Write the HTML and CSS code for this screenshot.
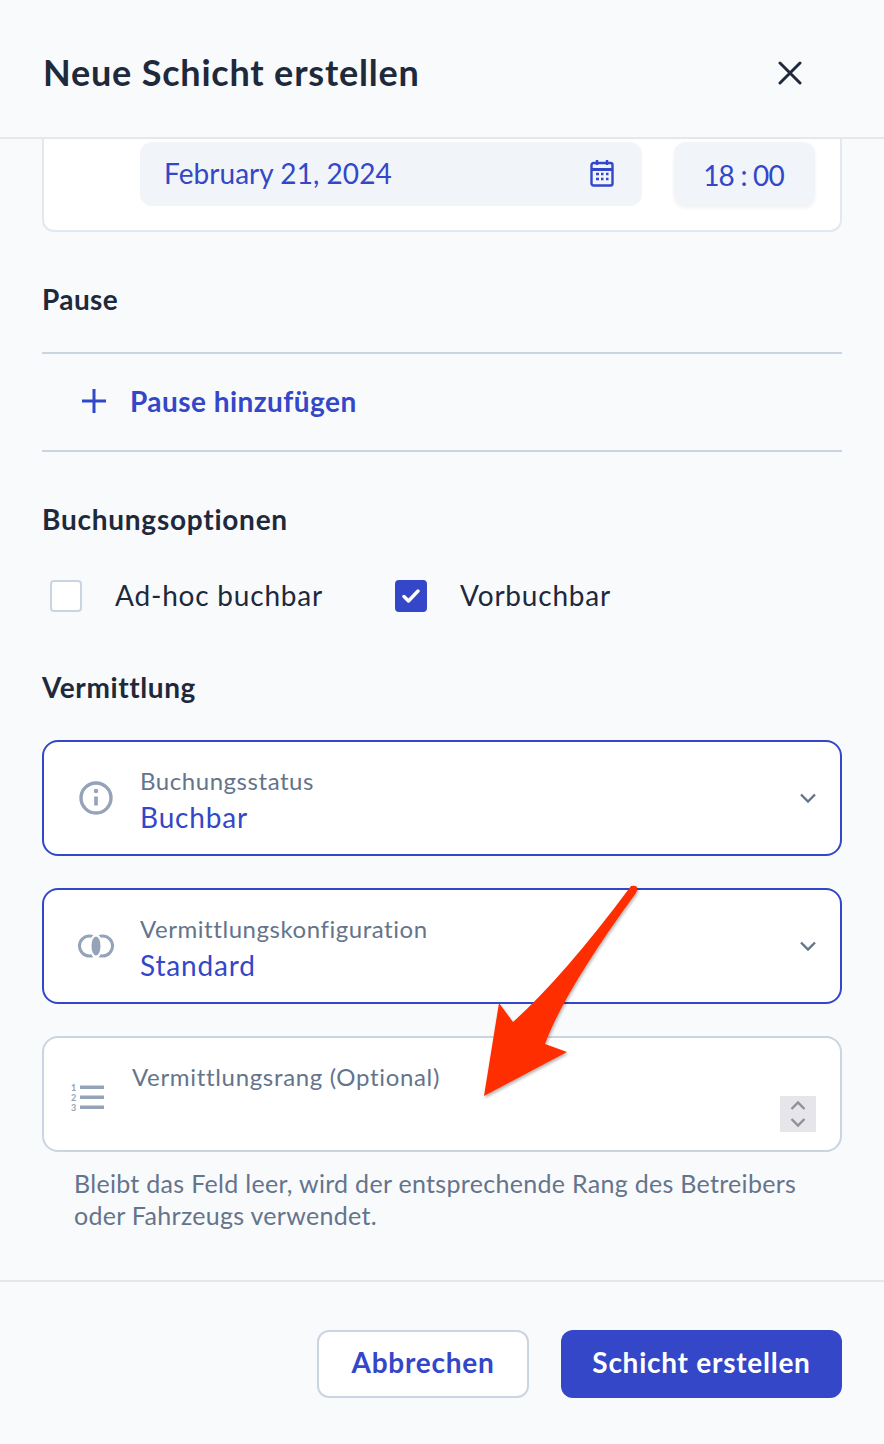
FILE: index.html
```html
<!DOCTYPE html>
<html lang="de">

<head>
    <meta charset="UTF-8">
    <meta name="viewport" content="width=device-width, initial-scale=1">
    <title>Neue Schicht erstellen</title>
    <link rel="stylesheet" href="styles.css">
</head>

<body>
    <header class="header">
        <h1>Neue Schicht erstellen</h1>
        <svg class="close" viewBox="0 0 24 24" width="24" height="24" fill="none" stroke="#1e293b" stroke-width="3" stroke-linecap="round">
            <path d="M2 2l20 20M22 2L2 22" />
        </svg>
    </header>

    <main class="content">
        <div class="card">
            <div class="date-field">
                <span class="date-text">February 21, 2024</span>
                <svg viewBox="0 0 24 28" width="24" height="28" fill="none" stroke="#3347c8" stroke-width="2.400">
                    <rect x="1.500" y="4" width="21" height="22.500" rx="2" />
                    <path d="M1.500 10.500h21" stroke-width="3" />
                    <path d="M7 1v5M17 1v5" />
                    <path d="M6 15h3M11 15h2.500M16 15h2.500M6 20h3M11 20h2.500M16 20h2.500" stroke-width="2.600" />
                </svg>
            </div>
            <div class="time-field">18 : 00</div>
        </div>

        <h2 class="section-title pause-title">Pause</h2>
        <div class="add-row">
            <svg viewBox="0 0 24 24" width="24" height="24" fill="none" stroke="#3347c8" stroke-width="3">
                <path d="M12 0v24M0 12h24" />
            </svg>
            <span class="add-text">Pause hinzufügen</span>
        </div>

        <h2 class="section-title options-title">Buchungsoptionen</h2>
        <div class="options">
            <label class="option">
                <span class="box"></span>
                <span class="option-text">Ad-hoc buchbar</span>
            </label>
            <label class="option">
                <span class="box checked">
                    <svg viewBox="0 0 18 14" width="18" height="14" fill="none" stroke="#fff" stroke-width="3.400" stroke-linecap="round" stroke-linejoin="round">
                        <path d="M2 7.500l4.500 4.500L16 2" />
                    </svg>
                </span>
                <span class="option-text">Vorbuchbar</span>
            </label>
        </div>

        <h2 class="section-title match-title">Vermittlung</h2>

        <div class="select">
            <svg class="select-icon" viewBox="0 0 36 36" width="36" height="36" fill="none" stroke="#94a3b8" stroke-width="3.400">
                <circle cx="18" cy="18" r="15" />
                <path d="M18 16.500v9" stroke-width="3.600" />
                <circle cx="18" cy="11" r="2.200" fill="#94a3b8" stroke="none" />
            </svg>
            <div class="select-text">
                <span class="select-label">Buchungsstatus</span>
                <span class="select-value">Buchbar</span>
            </div>
            <svg class="chevron" viewBox="0 0 16 10" width="16" height="10" fill="none" stroke="#64748b" stroke-width="2.400">
                <path d="M1 1.500l7 7 7-7" />
            </svg>
        </div>

        <div class="select">
            <svg class="select-icon" viewBox="0 0 36 24" width="36" height="24" fill="none" stroke="#94a3b8" stroke-width="3">
                <circle cx="11.500" cy="12" r="10" />
                <circle cx="24.500" cy="12" r="10" />
                <ellipse cx="18" cy="12" rx="6.500" ry="12" fill="#fff" stroke="none" />
                <ellipse cx="18" cy="12" rx="4.500" ry="9.500" fill="#94a3b8" stroke="none" />
            </svg>
            <div class="select-text">
                <span class="select-label">Vermittlungskonfiguration</span>
                <span class="select-value">Standard</span>
            </div>
            <svg class="chevron" viewBox="0 0 16 10" width="16" height="10" fill="none" stroke="#64748b" stroke-width="2.400">
                <path d="M1 1.500l7 7 7-7" />
            </svg>
        </div>

        <div class="rank-field">
            <svg class="rank-icon" viewBox="-2 -3 38 34" width="38" height="34" fill="#94a3b8">
                <rect x="9" y="1.500" width="24" height="3.500" />
                <rect x="9" y="11.500" width="24" height="3.500" />
                <rect x="9" y="21.500" width="24" height="3.500" />
                <text class="rank-digit" x="0" y="7">1</text>
                <text class="rank-digit" x="0" y="17">2</text>
                <text class="rank-digit" x="0" y="27">3</text>
            </svg>
            <span class="rank-label">Vermittlungsrang (Optional)</span>
            <div class="spinner">
                <svg viewBox="0 0 16 28" width="16" height="28" fill="none" stroke="#8f8f9d" stroke-width="2.400">
                    <path d="M1.500 9l6.500-6.500L14.500 9M1.500 19l6.500 6.500 6.500-6.500" />
                </svg>
            </div>
        </div>
        <p class="help">Bleibt das Feld leer, wird der entsprechende Rang des Betreibers oder Fahrzeugs verwendet.</p>
    </main>

    <footer class="footer">
        <button class="btn btn-secondary">Abbrechen</button>
        <button class="btn btn-primary">Schicht erstellen</button>
    </footer>

    <!-- red annotation arrow from the screenshot -->
    <svg class="arrow" viewBox="0 0 884 1444" width="884" height="1444">
        <defs>
            <filter id="arrowShadow" x="-10%" y="-10%" width="120%" height="120%">
                <feDropShadow dx="1" dy="2" stdDeviation="1.500" flood-color="#000" flood-opacity="0.3" />
            </filter>
        </defs>
        <path d="M631 886Q640 884 636 893Q565 990 545 1044L567 1052L484 1096L499 1003L513 1022Q565 975 631 886Z" fill="#ff2d00" filter="url(#arrowShadow)" />
    </svg>
</body>

</html>
```

FILE: styles.css
```css
* {
    box-sizing: border-box;
}

body {
    width: 884px;
    height: 1444px;
    margin: 0;
    overflow: hidden;
    position: relative;
    background-color: #f9fafc;
    color: #1e293b;
    font-family: Lato, "Noto Sans", Arial, sans-serif;
}

.header {
    height: 139px;
    padding: 7px 82px 0 43px;
    display: flex;
    align-items: center;
    justify-content: space-between;
    border-bottom: 2px solid #e5e7eb;
}

.header h1 {
    margin: 0;
    font-size: 36px;
    font-weight: 700;
    letter-spacing: 0.8px;
}

.close {
    display: block;
    margin-top: 1px;
}

.content {
    height: 1143px;
    padding: 0 42px;
    border-bottom: 2px solid #e5e7eb;
}

.card {
    height: 93px;
    padding: 3px 25px 0 96px;
    display: flex;
    gap: 32px;
    background-color: #fff;
    border: 2px solid #e2e8f0;
    border-top: none;
    border-radius: 0 0 12px 12px;
}

.date-field {
    flex: none;
    width: 502px;
    height: 64px;
    padding: 0 28px 2px 24px;
    display: flex;
    align-items: center;
    justify-content: space-between;
    background-color: #f1f4f9;
    border-radius: 12px;
    color: #3347c8;
    font-size: 28px;
}

.date-text {
    letter-spacing: 0.05px;
}

.time-field {
    flex: none;
    width: 141px;
    height: 64px;
    padding: 2px 2px 0 0;
    display: flex;
    align-items: center;
    justify-content: center;
    background-color: #f1f4f9;
    border-radius: 12px;
    box-shadow: 0 2px 4px rgba(0, 0, 0, 0.06);
    color: #3347c8;
    font-size: 28px;
    letter-spacing: -0.8px;
}

.section-title {
    margin: 0;
    font-size: 28px;
    font-weight: 700;
    line-height: 36px;
    letter-spacing: 0.6px;
}

.pause-title {
    margin-top: 49px;
    letter-spacing: 0.4px;
}

.add-row {
    height: 100px;
    margin-top: 35px;
    padding: 0 0 2px 40px;
    display: flex;
    align-items: center;
    gap: 24px;
    border-top: 2px solid #cbd5e1;
    border-bottom: 2px solid #cbd5e1;
    color: #3347c8;
    font-size: 28px;
    font-weight: 700;
}

.add-text {
    letter-spacing: 0.45px;
}

.options-title {
    margin-top: 49px;
    letter-spacing: 0.75px;
}

.options {
    margin-top: 41px;
    padding-left: 8px;
    display: flex;
    gap: 72px;
}

.option {
    display: flex;
    align-items: center;
    gap: 33px;
    font-size: 28px;
}

.option-text {
    letter-spacing: 0.8px;
    margin-bottom: 1px;
}

.box {
    width: 32px;
    height: 32px;
    display: flex;
    align-items: center;
    justify-content: center;
    background-color: #fff;
    border: 2px solid #cbd5e1;
    border-radius: 4px;
}

.box.checked {
    background-color: #3347c8;
    border-color: #3347c8;
}

.match-title {
    margin-top: 56px;
    margin-bottom: 35px;
}

.select {
    height: 116px;
    margin-bottom: 32px;
    padding: 0 24px 0 34px;
    display: flex;
    align-items: center;
    background-color: #fff;
    border: 2px solid #3347c8;
    border-radius: 16px;
}

.select-icon {
    flex: none;
}

.select-text {
    flex: 1;
    margin-left: 26px;
    padding-top: 5px;
    display: flex;
    flex-direction: column;
}

.select-label {
    color: #64748b;
    font-size: 24px;
    line-height: 32px;
    letter-spacing: 0.55px;
    margin-bottom: 1px;
}

.select-value {
    color: #3347c8;
    font-size: 28px;
    line-height: 38px;
    letter-spacing: 0.85px;
}

.rank-field {
    height: 116px;
    position: relative;
    padding: 23px 0 0 88px;
    background-color: #fff;
    border: 2px solid #cbd5e1;
    border-radius: 16px;
}

.rank-label {
    color: #64748b;
    font-size: 24px;
    line-height: 32px;
    letter-spacing: 0.67px;
}

.rank-icon {
    position: absolute;
    left: 25px;
    top: 43px;
}

.rank-digit {
    font-size: 9px;
    font-weight: 700;
}

.spinner {
    width: 36px;
    height: 36px;
    position: absolute;
    right: 24px;
    top: 58px;
    display: flex;
    align-items: center;
    justify-content: center;
    background-color: #e6e6ea;
}

.help {
    margin: 15px 0 0;
    padding: 0 32px;
    color: #64748b;
    font-size: 25px;
    line-height: 32px;
    letter-spacing: 0.3px;
}

.footer {
    height: 162px;
    padding: 48px 42px 0 0;
    display: flex;
    justify-content: flex-end;
    align-items: flex-start;
    gap: 32px;
}

.btn {
    height: 68px;
    padding: 0 0 4px;
    border-radius: 12px;
    font-family: inherit;
    font-size: 28px;
    font-weight: 700;
    letter-spacing: 0.75px;
    cursor: pointer;
}

.btn-secondary {
    width: 212px;
    background-color: #fff;
    border: 2px solid #cbd5e1;
    color: #3347c8;
}

.btn-primary {
    width: 281px;
    background-color: #3347c8;
    border: none;
    color: #fff;
}

.arrow {
    position: absolute;
    left: 0;
    top: 0;
    pointer-events: none;
}
```
